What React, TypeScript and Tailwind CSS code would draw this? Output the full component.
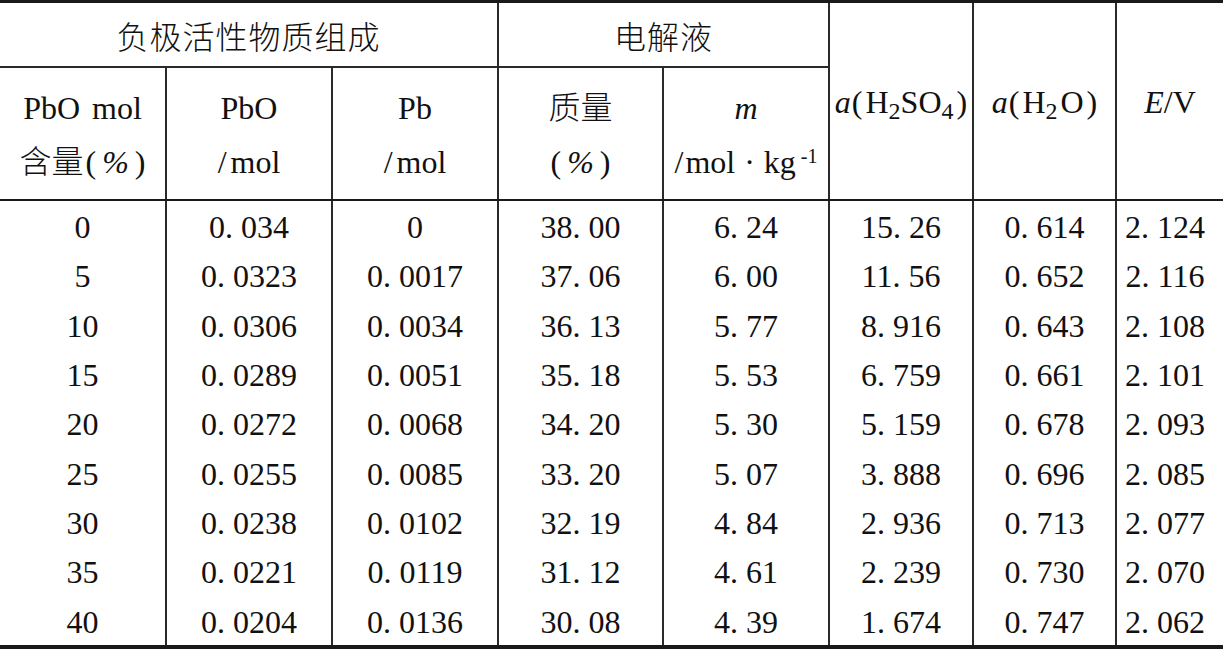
import React from "react";

const rows: string[][] = [
  ["0", "0. 034", "0", "38. 00", "6. 24", "15. 26", "0. 614", "2. 124"],
  ["5", "0. 0323", "0. 0017", "37. 06", "6. 00", "11. 56", "0. 652", "2. 116"],
  ["10", "0. 0306", "0. 0034", "36. 13", "5. 77", "8. 916", "0. 643", "2. 108"],
  ["15", "0. 0289", "0. 0051", "35. 18", "5. 53", "6. 759", "0. 661", "2. 101"],
  ["20", "0. 0272", "0. 0068", "34. 20", "5. 30", "5. 159", "0. 678", "2. 093"],
  ["25", "0. 0255", "0. 0085", "33. 20", "5. 07", "3. 888", "0. 696", "2. 085"],
  ["30", "0. 0238", "0. 0102", "32. 19", "4. 84", "2. 936", "0. 713", "2. 077"],
  ["35", "0. 0221", "0. 0119", "31. 12", "4. 61", "2. 239", "0. 730", "2. 070"],
  ["40", "0. 0204", "0. 0136", "30. 08", "4. 39", "1. 674", "0. 747", "2. 062"],
];

const cols = "grid-cols-[167px_166px_166px_165px_166px_144px_143px_106px]";

export default function App() {
  return (
    <div className="w-[1223px] h-[650px] bg-white text-[#111] font-['Liberation_Serif','Noto_Sans_CJK_SC',serif] text-[32px] leading-none">
      <div className="border-t-[3px] border-b-4 border-[#1a1a1a]">
        {/* header */}
        <div className={`grid ${cols} grid-rows-[65px_131px] border-b-2 border-[#1a1a1a]`}>
          <div className="col-span-3 border-r-2 border-b-2 border-[#2a2a2a] flex items-center justify-center pt-[6px] tracking-[1px] font-light">
            负极活性物质组成
          </div>
          <div className="col-span-2 border-r-2 border-b-2 border-[#2a2a2a] flex items-center justify-center pt-[6px] tracking-[1px] font-light">
            电解液
          </div>
          <div className="row-span-2 border-r-2 border-[#2a2a2a] flex items-center justify-center pt-[2px] whitespace-nowrap">
            <span className="italic">a</span>
            <span className="ml-[1px]">(</span>
            <span className="ml-[3px]">
              H<sub>2</sub>SO<sub>4</sub>
            </span>
            <span className="ml-[3px]">)</span>
          </div>
          <div className="row-span-2 border-r-2 border-[#2a2a2a] flex items-center justify-center pt-[2px] whitespace-nowrap">
            <span className="italic">a</span>
            <span className="ml-[1px]">(</span>
            <span className="ml-[3px]">
              H<sub>2</sub>
              <span className="ml-[3px]">O</span>
            </span>
            <span className="ml-[3px]">)</span>
          </div>
          <div className="row-span-2 flex items-center justify-center pt-[2px] whitespace-nowrap">
            <span className="italic">E</span>/V
          </div>

          <div className="border-r-2 border-[#2a2a2a] flex flex-col items-center justify-center leading-[54px] pt-[2px]">
            <div className="whitespace-nowrap">
              PbO<span className="ml-[12px]">mol</span>
            </div>
            <div className="whitespace-nowrap font-light">
              含量
              <span className="ml-[2px]">(</span>
              <span className="mx-[6px] italic">%</span>
              <span>)</span>
            </div>
          </div>
          <div className="border-r-2 border-[#2a2a2a] flex flex-col items-center justify-center leading-[54px] pt-[2px]">
            <div>PbO</div>
            <div className="whitespace-nowrap">
              <span className="mr-[4px]">/</span>mol
            </div>
          </div>
          <div className="border-r-2 border-[#2a2a2a] flex flex-col items-center justify-center leading-[54px] pt-[2px]">
            <div>Pb</div>
            <div className="whitespace-nowrap">
              <span className="mr-[4px]">/</span>mol
            </div>
          </div>
          <div className="border-r-2 border-[#2a2a2a] flex flex-col items-center justify-center leading-[54px] pt-[2px]">
            <div className="font-light">质量</div>
            <div className="whitespace-nowrap">
              (<span className="mx-[6px] italic">%</span>)
            </div>
          </div>
          <div className="border-r-2 border-[#2a2a2a] flex flex-col items-center justify-center leading-[54px] pt-[2px]">
            <div className="italic">m</div>
            <div className="whitespace-nowrap">
              <span className="mr-[2px]">/</span>mol<span className="mx-[9px]">·</span>kg
              <sup className="ml-[5px] text-[20px]">-1</sup>
            </div>
          </div>
        </div>

        {/* body */}
        <div className={`grid ${cols} grid-rows-[repeat(9,1fr)] h-[444px]`}>
          {rows.map((r, i) =>
            r.map((v, j) => (
              <div
                key={`${i}-${j}`}
                className={
                  j === 7
                    ? "flex items-center justify-center pr-[10px] pt-[3px] whitespace-pre"
                    : "border-r-2 border-[#2a2a2a] flex items-center justify-center pt-[3px] whitespace-pre"
                }
              >
                {v}
              </div>
            ))
          )}
        </div>
      </div>
    </div>
  );
}
